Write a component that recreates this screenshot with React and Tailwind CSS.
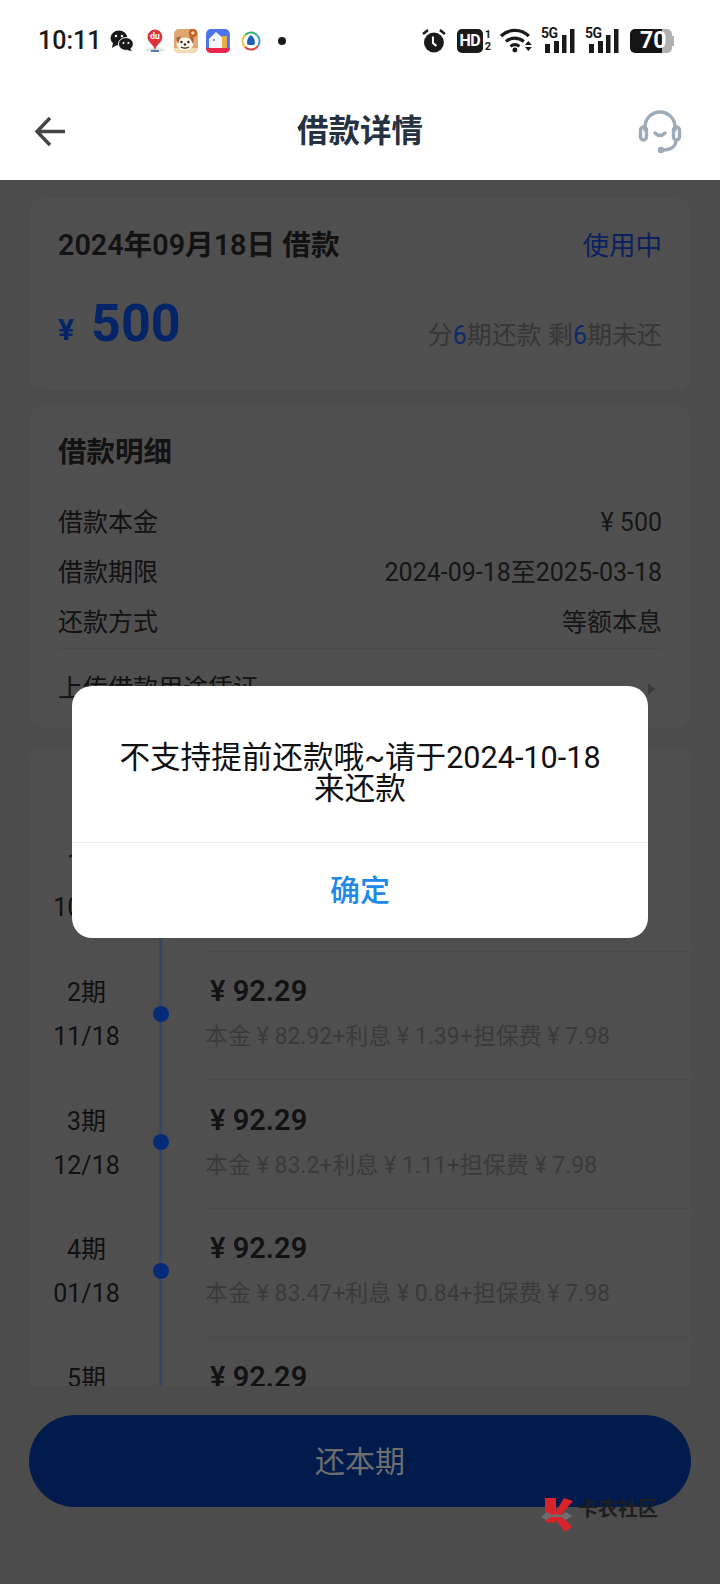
const FONT = { fontFamily: '"Roboto", "Noto Sans CJK SC", sans-serif' };

const plan = [
  { no: '1期', date: '10/18', detail: '本金 ¥ 82.64+利息 ¥ 1.67+担保费 ¥ 7.98' },
  { no: '2期', date: '11/18', detail: '本金 ¥ 82.92+利息 ¥ 1.39+担保费 ¥ 7.98' },
  { no: '3期', date: '12/18', detail: '本金 ¥ 83.2+利息 ¥ 1.11+担保费 ¥ 7.98' },
  { no: '4期', date: '01/18', detail: '本金 ¥ 83.47+利息 ¥ 0.84+担保费 ¥ 7.98' },
  { no: '5期', date: '02/18', detail: '本金 ¥ 83.75+利息 ¥ 0.56+担保费 ¥ 7.98' },
];

const details = [
  ['借款本金', '¥ 500'],
  ['借款期限', '2024-09-18至2025-03-18'],
  ['还款方式', '等额本息'],
];

function Signal() {
  return (
    <div className="relative w-[34px] h-[25px]">
      <span className="absolute left-0 -top-[2px] text-[14px] leading-[14px] font-bold text-[#1a1a1a] tracking-[-0.5px]">5G</span>
      <svg width="34" height="25" viewBox="0 0 34 25" className="absolute left-0 top-0">
        <rect x="4" y="16" width="5" height="9" fill="#1a1a1a" />
        <rect x="13" y="13" width="5" height="12" fill="#1a1a1a" />
        <rect x="21" y="7" width="4.500" height="18" fill="#1a1a1a" />
        <rect x="29" y="1" width="4.500" height="24" fill="#1a1a1a" />
      </svg>
    </div>
  );
}

function StatusBar() {
  return (
    <div className="h-[80px] flex items-center pl-[38px] pr-[46px] pt-[1px]">
      <span className="text-[25px] font-medium text-[#1a1a1a] w-[72px]">10:11</span>
      <svg width="24" height="22" viewBox="0 0 24 22">
        <ellipse cx="9" cy="8" rx="8.500" ry="7.500" fill="#1a1a1a" />
        <path d="M3 13l-1 5 5-3z" fill="#1a1a1a" />
        <ellipse cx="16" cy="14" rx="7.500" ry="6.500" fill="#1a1a1a" stroke="#fff" strokeWidth="1" />
        <path d="M20 18l2 3-5-1z" fill="#1a1a1a" />
        <circle cx="6" cy="6" r="1.200" fill="#fff" />
        <circle cx="12" cy="6" r="1.200" fill="#fff" />
        <circle cx="13.500" cy="13" r="1" fill="#fff" />
        <circle cx="18.500" cy="13" r="1" fill="#fff" />
      </svg>
      <svg width="22" height="24" viewBox="0 0 22 24" className="ml-[10px]">
        <ellipse cx="11" cy="21" rx="10.500" ry="2" fill="#d5eadf" />
        <path d="M11 21C9 15 3.500 13 3.500 8a7.500 7.500 0 0 1 15 0C18.500 13 13 15 11 21z" fill="#e0323c" />
        <text x="11" y="10.500" textAnchor="middle" fontSize="8.500" fontWeight="700" fill="#fff">du</text>
        <rect x="7" y="21" width="8" height="2" fill="#5878a8" />
      </svg>
      <svg width="24" height="24" viewBox="0 0 24 24" className="ml-[9px]">
        <rect width="24" height="24" rx="5" fill="#dfa672" />
        <path d="M0 19h24v0a5 5 0 0 1-5 5H5a5 5 0 0 1-5-5z" fill="#f3d9b4" />
        <ellipse cx="11" cy="15" rx="8.500" ry="6.500" fill="#fdf8ee" />
        <path d="M2 9l5-2-3 8zM20 9l-5-2 4 8z" fill="#a8683c" />
        <circle cx="19" cy="4" r="4.200" fill="#c85a28" />
        <circle cx="19" cy="4" r="1.800" fill="#f6d89c" />
        <circle cx="7.500" cy="13" r="1.200" fill="#222" />
        <circle cx="14.500" cy="13" r="1.200" fill="#222" />
        <circle cx="11" cy="15.500" r="1.200" fill="#222" />
        <path d="M7 18q4 2.500 8 0" stroke="#4a2f1a" strokeWidth="1.200" fill="none" />
      </svg>
      <svg width="24" height="24" viewBox="0 0 24 24" className="ml-[8px]">
        <rect width="24" height="24" rx="5" fill="#4d74ee" />
        <path d="M3 10l7-7 7 6v10H3z" fill="#f2f6ff" />
        <rect x="16" y="7" width="5" height="12" fill="#e8b03c" />
        <circle cx="8" cy="11" r="1" fill="#4d74ee" />
        <path d="M0 19h24a5 5 0 0 1-5 5H5a5 5 0 0 1-5-5z" fill="#e8264c" />
      </svg>
      <svg width="20" height="20" viewBox="0 0 20 20" className="ml-[11px]">
        <path d="M4 4a8.500 8.500 0 0 1 12 0" stroke="#2fb37a" strokeWidth="2" fill="none" />
        <path d="M16 4a8.500 8.500 0 0 1 1 11" stroke="#3aa0d8" strokeWidth="2" fill="none" />
        <path d="M17 15a8.500 8.500 0 0 1-13 1" stroke="#e0403c" strokeWidth="2" fill="none" />
        <path d="M4 16A8.500 8.500 0 0 1 4 4" stroke="#e8c83c" strokeWidth="2" fill="none" />
        <path d="M10 4c3 2 4 5 4 8a2 2 0 0 1-2 2H8a2 2 0 0 1-2-2c0-3 1-6 4-8z" fill="#2060b8" />
      </svg>
      <span className="ml-[17px] w-[8px] h-[8px] rounded-full bg-[#1a1a1a]" />

      <svg width="24" height="24" viewBox="0 0 24 24" className="ml-[136px]">
        <circle cx="12" cy="13.500" r="10" fill="#1a1a1a" />
        <path d="M11 7.500v6.500l3.500 3" stroke="#fff" strokeWidth="2" fill="none" />
        <path d="M1 5l5-4M23 5l-5-4" stroke="#1a1a1a" strokeWidth="2.500" />
      </svg>
      <div className="ml-[11px] flex items-center">
        <div className="w-[26px] h-[24px] rounded-[5px] bg-[#1a1a1a] text-white text-[16px] leading-[24px] font-bold text-center tracking-[-0.5px]">HD</div>
        <div className="ml-[2px] flex flex-col text-[11px] leading-[12px] font-bold text-[#1a1a1a]">
          <span>1</span>
          <span>2</span>
        </div>
      </div>
      <svg width="32" height="25" viewBox="0 0 32 25" className="ml-[9px]">
        <path d="M1 8C9 .500 21 .500 29 8" stroke="#1a1a1a" strokeWidth="3.200" fill="none" />
        <path d="M6 13.500c5-4.500 12-4.500 18 0" stroke="#1a1a1a" strokeWidth="3.200" fill="none" />
        <path d="M10.500 18.500c3-2.500 6-2.500 9 0" stroke="#1a1a1a" strokeWidth="3" fill="none" />
        <circle cx="15" cy="22" r="2.500" fill="#1a1a1a" />
        <path d="M25 17h7l-3.500-4zM25 19h7l-3.500 4z" fill="#1a1a1a" />
      </svg>
      <div className="ml-[9px]"><Signal /></div>
      <div className="ml-[10px]"><Signal /></div>
      <div className="ml-[11px] relative w-[44px] h-[24px] flex">
        <div className="w-[32px] h-full bg-[#141414] rounded-l-[5px]" />
        <div className="w-[10px] h-full bg-[#b0b0b0] rounded-r-[5px]" />
        <div className="w-[2px] h-[10px] mt-[7px] bg-[#b0b0b0]" />
        <span className="absolute left-[10px] top-0 text-white text-[23px] leading-[24px] font-bold">70</span>
      </div>
    </div>
  );
}

function Header() {
  return (
    <div className="h-[100px] flex items-center pl-[34px] pr-[38px] pt-[3px]">
      <svg width="32" height="32" viewBox="0 0 32 32" fill="none" stroke="#444" strokeWidth="3.400">
        <path d="M31 15.500H3M16 2L3 15.500 16 29" />
      </svg>
      <span className="flex-1 text-center text-[31.500px] font-semibold text-[#263241] pl-[16px]">借款详情</span>
      <svg width="44" height="44" viewBox="0 0 44 44" fill="none" stroke="#9eabb9" strokeWidth="3.400" strokeLinecap="round">
        <path d="M7 20v-3a15 15 0 0 1 30 0v3" />
        <rect x="2.500" y="17" width="6" height="13" rx="3" />
        <rect x="35.500" y="17" width="6" height="13" rx="3" />
        <path d="M17 23q5 5 10 0" />
        <path d="M38 30c0 7-6 10-13 10" />
        <circle cx="23" cy="40" r="1.500" fill="#9eabb9" />
      </svg>
    </div>
  );
}

function SummaryCard() {
  return (
    <div className="h-[192px] bg-[#4f4f4f] rounded-[14px] px-[29px] pt-[28px]">
      <div className="flex items-center justify-between h-[40px]">
        <span className="text-[28.700px] font-semibold text-[#121212]">2024年09月18日 借款</span>
        <span className="text-[26.500px] text-[#0a2060]">使用中</span>
      </div>
      <div className="flex items-center justify-between mt-[24px] h-[68px]">
        <div className="flex items-center text-[#042468] font-bold">
          <span className="text-[30px] mt-[10px]">¥</span>
          <span className="text-[52px] ml-[17px]">500</span>
        </div>
        <span className="text-[25px] text-[#363636] mt-[24px]">分<span className="text-[#0e2a68]">6</span>期还款 剩<span className="text-[#0e2a68]">6</span>期未还</span>
      </div>
    </div>
  );
}

function DetailCard() {
  return (
    <div className="h-[323px] mt-[15px] bg-[#4f4f4f] rounded-[14px] px-[29px] pt-[27px] text-[#111]">
      <div className="text-[28.500px] font-semibold leading-[42px] text-[#121212]">借款明细</div>
      <div className="mt-[29px] flex flex-col gap-[10px]">
        {details.map(([k, v]) => (
          <div key={k} className="h-[40px] flex items-center justify-between text-[25px]">
            <span>{k}</span>
            <span className="text-[#161616]">{v}</span>
          </div>
        ))}
      </div>
      <div className="mt-[5px] border-t border-[#4a4a4a] h-[80px] flex items-center justify-between text-[25px]">
        <span>上传借款用途凭证</span>
        <span className="w-0 h-0 border-y-[6px] border-y-transparent border-l-[7px] border-l-[#3a3a3a] mr-[7px]" />
      </div>
    </div>
  );
}

function PlanCard() {
  return (
    <div className="mt-[20px] bg-[#4f4f4f] rounded-[14px] pt-[74px]">
      {plan.map((p, i) => (
        <div key={p.no} className="h-[128.700px] flex items-center">
          <div className="w-[115px] text-center text-[25px] leading-[44px] text-[#111]">
            <div>{p.no}</div>
            <div>{p.date}</div>
          </div>
          <div className="relative w-[33px] h-full flex justify-center">
            <div className="w-[3px] h-full bg-[#36486a]" />
            <div className="absolute top-[55px] w-[16px] h-[16px] rounded-full bg-[#062a78]" />
          </div>
          <div className={`flex-1 ml-[29px] h-full flex flex-col justify-center ${i > 0 ? 'border-t border-[#4a4a4a]' : ''}`}>
            <div className="text-[29px] font-semibold leading-[44px] -mt-[3px] text-[#121212] pl-[4px]">¥ 92.29</div>
            <div className="text-[23px] leading-[44px] mt-[2px] -ml-[1px] text-[#3a3a3a]">{p.detail}</div>
          </div>
        </div>
      ))}
    </div>
  );
}

function Watermark() {
  return (
    <div className="absolute left-[540px] top-[1497px] flex items-start">
      <svg width="34" height="36" viewBox="0 0 34 36">
        <path d="M5 1h11v13l8-13 9 3-12 14 11 12-7 5-10-13v4l-10-1z" fill="#d8232a" />
        <path d="M1 20l6-5 5 3 4-1 5 1 5-3 6 4-6 4-5-3-10 0-5 3z" fill="#6f6f6f" />
      </svg>
      <span className="ml-[4px] text-[20px] leading-[24px] font-semibold text-[#1e1e1e]">卡农社区</span>
    </div>
  );
}

export default function App() {
  return (
    <div style={FONT} className="relative w-[720px] h-[1584px] overflow-hidden bg-white flex flex-col">
      <StatusBar />
      <Header />
      <div className="flex-1 min-h-0 bg-[#4c4c4c] flex flex-col">
        <div className="h-[1206px] overflow-hidden px-[29px] pt-[18px]">
          <SummaryCard />
          <DetailCard />
          <PlanCard />
        </div>
        <div className="px-[29px] pt-[29px]">
          <div className="h-[92px] rounded-[46px] bg-[#001b4c] flex items-center justify-center text-[30px] text-[#6e6e6e]">还本期</div>
        </div>
      </div>
      {/* dialog */}
      <div className="absolute left-[72px] top-[686px] w-[576px] h-[252px] bg-white rounded-[20px] flex flex-col">
        <div className="h-[156px] px-[44px] pt-[18px] flex items-center justify-center text-center text-[30.600px] leading-[31px] text-[#111]">
          不支持提前还款哦~请于2024-10-18来还款
        </div>
        <div className="flex-1 border-t border-[#f0f0f0] flex items-center justify-center text-[30px] font-medium text-[#2089e8]">确定</div>
      </div>
      <Watermark />
    </div>
  );
}
